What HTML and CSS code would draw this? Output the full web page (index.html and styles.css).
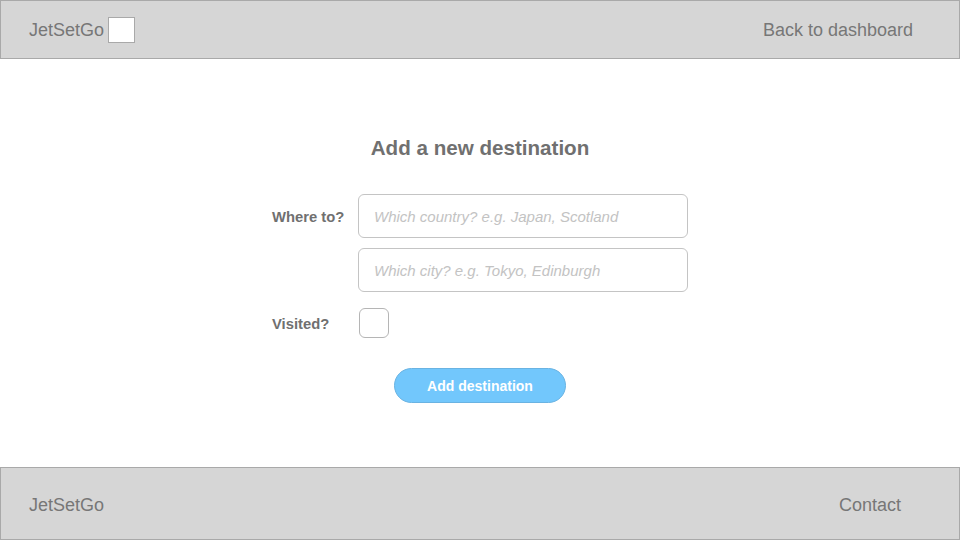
FILE: index.html
```html
<!DOCTYPE html>
<html>
<head>
<meta charset="utf-8">
<link rel="stylesheet" href="styles.css">
</head>
<body>
<header class="topbar">
  <div class="brand">JetSetGo <span class="logo-box"></span></div>
  <a class="nav-link" href="#">Back to dashboard</a>
</header>
<main class="content">
  <h1 class="title">Add a new destination</h1>
  <form class="form">
    <label class="label">Where to?</label>
    <input class="field" type="text" placeholder="Which country? e.g. Japan, Scotland">
    <span></span>
    <input class="field" type="text" placeholder="Which city? e.g. Tokyo, Edinburgh">
    <label class="label label-visited">Visited?</label>
    <div class="check-row"><span class="checkbox"></span></div>
    <div class="actions"><button class="btn" type="button">Add destination</button></div>
  </form>
</main>
<footer class="bottombar">
  <div class="brand">JetSetGo</div>
  <a class="nav-link contact" href="#">Contact</a>
</footer>
</body>
</html>
```
FILE: styles.css
```css
* { box-sizing: border-box; }
html, body { margin: 0; padding: 0; }
body {
  width: 960px;
  height: 540px;
  display: flex;
  flex-direction: column;
  font-family: "Liberation Sans", Arial, sans-serif;
  color: #777;
  background: #fff;
}
.topbar {
  height: 59px;
  flex: none;
  background: #d6d6d6;
  border: 1px solid #a9a9a9;
  display: flex;
  align-items: center;
  justify-content: space-between;
  padding: 2px 46px 0 28px;
}
.brand {
  font-size: 18px;
  color: #777;
  display: flex;
  align-items: center;
  gap: 4px;
}
.logo-box {
  width: 27px;
  height: 26px;
  background: #fff;
  border: 1px solid #a9a9a9;
  display: inline-block;
  margin-top: -2px;
}
.nav-link {
  font-size: 18px;
  color: #777;
  text-decoration: none;
}
.content {
  flex: 1;
  display: flex;
  flex-direction: column;
  align-items: center;
  padding-top: 77px;
}
.title {
  margin: 0;
  font-size: 20.6px;
  line-height: 24px;
  font-weight: bold;
  color: #707070;
}
.form {
  margin-top: 34px;
  width: 416px;
  display: grid;
  grid-template-columns: 86px 330px;
  row-gap: 10px;
  align-items: center;
}
.label {
  font-size: 14.8px;
  font-weight: bold;
  color: #707070;
  padding-top: 2px;
}
.field {
  height: 44px;
  width: 330px;
  border: 1px solid #c4c4c4;
  border-radius: 6px;
  padding: 0 15px;
  font-family: "Liberation Sans", Arial, sans-serif;
  font-size: 15px;
  color: #777;
  outline: none;
}
.field::placeholder {
  color: #c3c3c3;
  font-style: italic;
}
.label-visited { margin-top: 6px; }
.check-row { margin-top: 6px; }
.checkbox {
  display: block;
  width: 30px;
  height: 30px;
  margin-left: 1px;
  border: 1px solid #b5b5b5;
  border-radius: 6px;
  background: #fff;
}
.actions {
  grid-column: 1 / -1;
  display: flex;
  justify-content: center;
  margin-top: 20px;
}
.btn {
  width: 172px;
  height: 35px;
  border-radius: 18px;
  background: #72c7fc;
  border: 1px solid #6ab3e2;
  color: #fff;
  font-family: "Liberation Sans", Arial, sans-serif;
  font-weight: bold;
  font-size: 14px;
  padding: 1px 0 0;
}
.bottombar {
  height: 73px;
  flex: none;
  background: #d6d6d6;
  border: 1px solid #a9a9a9;
  display: flex;
  align-items: center;
  justify-content: space-between;
  padding: 3px 58px 0 28px;
}
```
